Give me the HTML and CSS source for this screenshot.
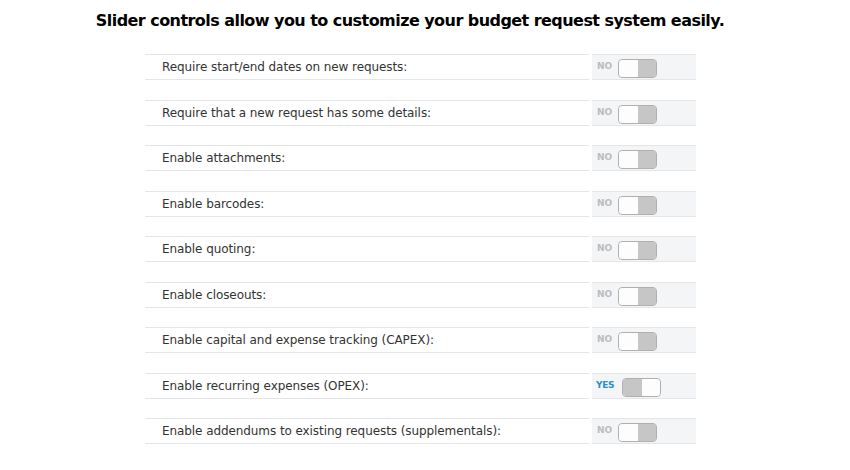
FILE: index.html
```html
<!DOCTYPE html>
<html>
<head>
<meta charset="utf-8">
<link rel="stylesheet" href="styles.css">
</head>
<body>
<h1 class="title">Slider controls allow you to customize your budget request system easily.</h1>
<div class="list">
  <div class="row"><div class="label">Require start/end dates on new requests:</div><div class="ctrl"><span class="state">NO</span><span class="toggle"><span class="knob"></span><span class="track"></span></span></div></div>
  <div class="row"><div class="label">Require that a new request has some details:</div><div class="ctrl"><span class="state">NO</span><span class="toggle"><span class="knob"></span><span class="track"></span></span></div></div>
  <div class="row"><div class="label">Enable attachments:</div><div class="ctrl"><span class="state">NO</span><span class="toggle"><span class="knob"></span><span class="track"></span></span></div></div>
  <div class="row"><div class="label">Enable barcodes:</div><div class="ctrl"><span class="state">NO</span><span class="toggle"><span class="knob"></span><span class="track"></span></span></div></div>
  <div class="row"><div class="label">Enable quoting:</div><div class="ctrl"><span class="state">NO</span><span class="toggle"><span class="knob"></span><span class="track"></span></span></div></div>
  <div class="row"><div class="label">Enable closeouts:</div><div class="ctrl"><span class="state">NO</span><span class="toggle"><span class="knob"></span><span class="track"></span></span></div></div>
  <div class="row"><div class="label">Enable capital and expense tracking (CAPEX):</div><div class="ctrl"><span class="state">NO</span><span class="toggle"><span class="knob"></span><span class="track"></span></span></div></div>
  <div class="row"><div class="label">Enable recurring expenses (OPEX):</div><div class="ctrl on"><span class="state">YES</span><span class="toggle"><span class="track"></span><span class="knob"></span></span></div></div>
  <div class="row"><div class="label">Enable addendums to existing requests (supplementals):</div><div class="ctrl"><span class="state">NO</span><span class="toggle"><span class="knob"></span><span class="track"></span></span></div></div>
</div>
</body>
</html>
```
FILE: styles.css
```css
* { box-sizing: border-box; }
html, body { margin: 0; padding: 0; background: #fff; }
body { width: 850px; height: 470px; overflow: hidden; }
.title {
  margin: 0;
  padding-top: 11px;
  height: 54px;
  text-align: center;
  font-family: "DejaVu Sans", sans-serif;
  font-weight: bold;
  font-size: 16px;
  letter-spacing: -0.55px;
  color: #000;
  padding-right: 30px;
}
.list {
  margin-left: 145px;
  width: 551px;
  display: flex;
  flex-direction: column;
  gap: 19.5px;
}
.row {
  display: flex;
  height: 26px;
  gap: 3px;
}
.label {
  flex: 1;
  border-top: 1px solid #e3e5e8;
  border-bottom: 1px solid #e3e5e8;
  padding-left: 17px;
  font-family: "DejaVu Sans", sans-serif;
  font-size: 12px;
  letter-spacing: -0.08px;
  color: #333;
  line-height: 25px;
}
.ctrl {
  width: 104px;
  background: #f4f5f7;
  border-top: 1px solid #e3e5e8;
  border-bottom: 1px solid #e3e5e8;
  display: flex;
  align-items: flex-start;
  padding: 3px 0 0 5px;
}
.state {
  font-family: "DejaVu Sans", sans-serif;
  font-weight: bold;
  font-size: 9px;
  color: #bcbcbc;
  width: 21px;
  line-height: 12px;
  margin-top: 2px;
}
.ctrl.on { padding-left: 4px; }
.ctrl.on .state { color: #2b8fd2; width: 26px; letter-spacing: -0.3px; }
.toggle {
  display: flex;
  width: 39px;
  height: 19px;
  border: 1px solid #b0b0b0;
  border-radius: 4px;
  overflow: hidden;
  margin-top: 1px;
}
.knob { flex: 1; background: #fdfdfd; border-radius: 3px; }
.track { flex: 1; background: #c6c6c6; }
```
